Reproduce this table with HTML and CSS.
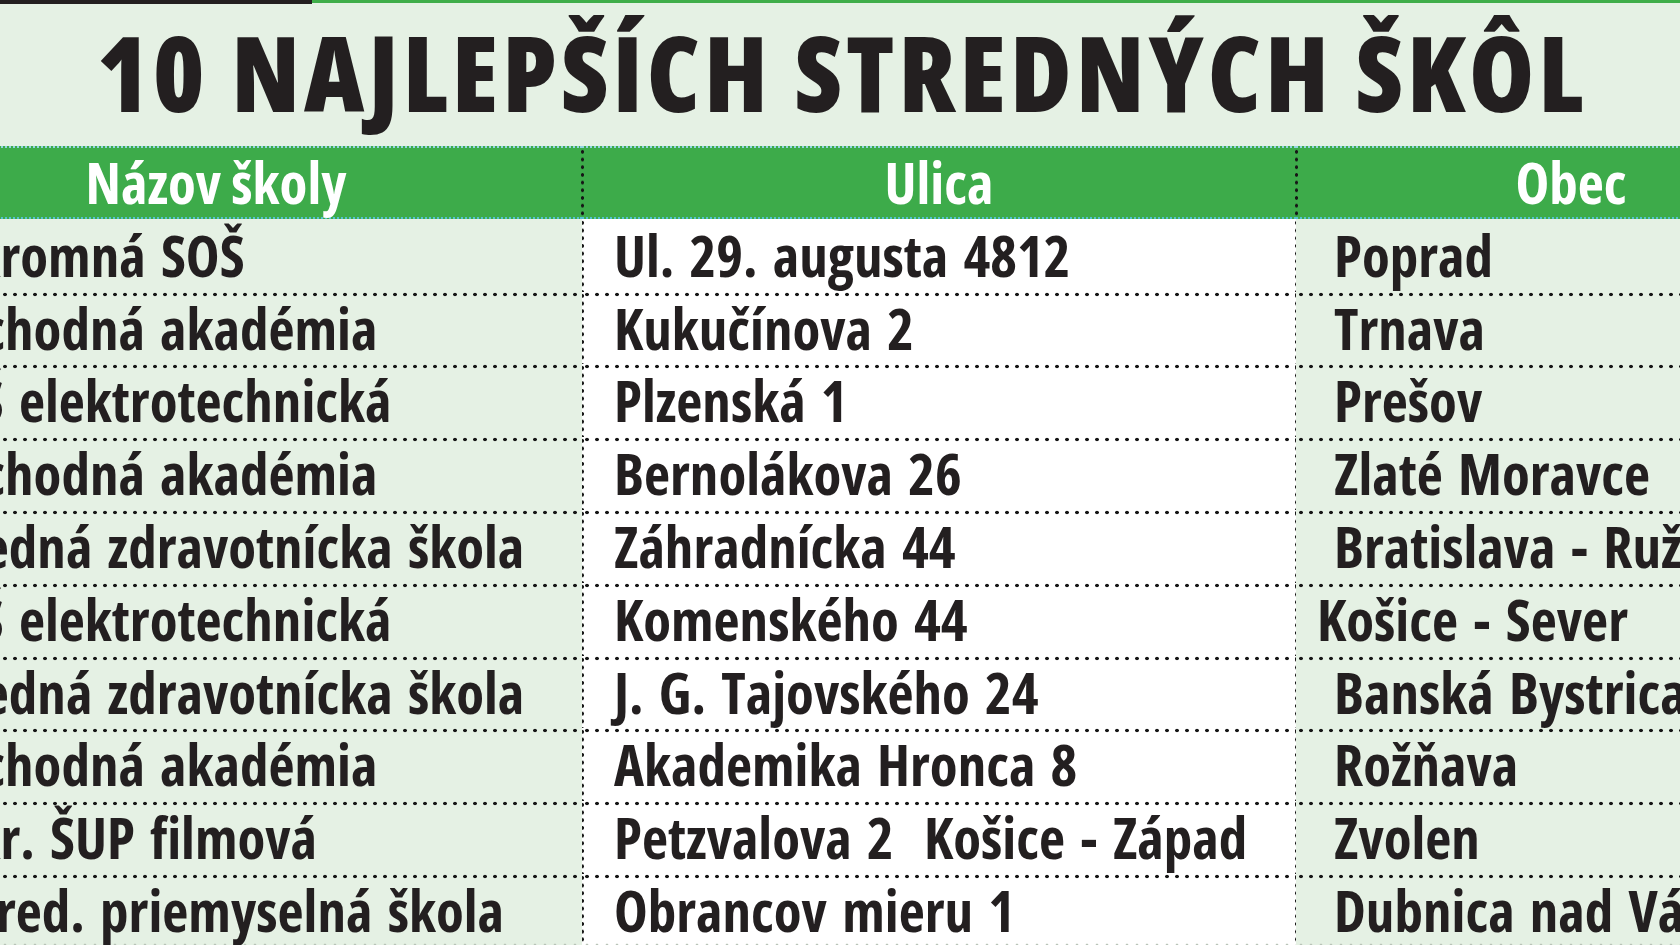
FILE: index.html
```html
<!DOCTYPE html>
<html lang="sk">
<head>
<meta charset="utf-8">
<title>10 najlepších stredných škôl</title>
<link rel="stylesheet" href="styles.css">
</head>
<body>
<div class="page">
  <div class="topline">
    <div class="topline-dark"></div>
    <div class="topline-green"></div>
  </div>
  <h1 class="title">10 NAJLEPŠÍCH STREDNÝCH ŠKÔL</h1>
  <div class="table-wrap">
    <div class="table">
      <div class="th th-name">Názov školy</div>
      <div class="th th-street">Ulica</div>
      <div class="th th-city">Obec</div>

      <div class="td td-name td-first">Súkromná SOŠ</div>
      <div class="td td-street td-first">Ul. 29. augusta 4812</div>
      <div class="td td-city td-first">Poprad</div>

      <div class="td td-name">Obchodná akadémia</div>
      <div class="td td-street">Kukučínova 2</div>
      <div class="td td-city">Trnava</div>

      <div class="td td-name">SOŠ elektrotechnická</div>
      <div class="td td-street">Plzenská 1</div>
      <div class="td td-city">Prešov</div>

      <div class="td td-name">Obchodná akadémia</div>
      <div class="td td-street">Bernolákova 26</div>
      <div class="td td-city">Zlaté Moravce</div>

      <div class="td td-name">Stredná zdravotnícka škola</div>
      <div class="td td-street">Záhradnícka 44</div>
      <div class="td td-city">Bratislava - Ružinov</div>

      <div class="td td-name">SOŠ elektrotechnická</div>
      <div class="td td-street">Komenského 44</div>
      <div class="td td-city td-city-tight">Košice - Sever</div>

      <div class="td td-name">Stredná zdravotnícka škola</div>
      <div class="td td-street">J. G. Tajovského 24</div>
      <div class="td td-city">Banská Bystrica</div>

      <div class="td td-name">Obchodná akadémia</div>
      <div class="td td-street">Akademika Hronca 8</div>
      <div class="td td-city">Rožňava</div>

      <div class="td td-name">Súkr. ŠUP filmová</div>
      <div class="td td-street">Petzvalova 2&nbsp; Košice - Západ</div>
      <div class="td td-city">Zvolen</div>

      <div class="td td-name td-name-indent td-last">Stred. priemyselná škola</div>
      <div class="td td-street td-last">Obrancov mieru 1</div>
      <div class="td td-city td-last">Dubnica nad Váhom</div>
    </div>
  </div>
</div>
</body>
</html>
```

FILE: styles.css
```css
html, body {
  margin: 0;
  padding: 0;
}

body {
  background: #e5f1e4;
  font-family: "Open Sans", "DejaVu Sans Condensed", sans-serif;
  font-stretch: 75%;
  color: #231f20;
  overflow: hidden;
}

.page {
  width: 1680px;
  height: 945px;
  overflow: hidden;
}

.topline {
  display: flex;
  align-items: flex-start;
  height: 4px;
}

.topline-dark {
  width: 312px;
  height: 4px;
  background: #231f20;
}

.topline-green {
  flex: 1;
  height: 3px;
  background: #3fae49;
}

.title {
  margin: 0;
  padding: 15px 0 22px 4px;
  height: 105px;
  font-size: 105px;
  line-height: 105px;
  font-weight: 800;
  font-stretch: 87.5%;
  letter-spacing: 4px;
  text-align: center;
  white-space: nowrap;
}

.table-wrap {
  overflow: hidden;
}

.table {
  display: grid;
  grid-template-columns: 732px 714px 550px;
  grid-auto-rows: 72.8px;
  margin-left: -150px;
  width: 1996px;
}

.th {
  height: 73px;
  box-sizing: border-box;
  background-color: #3dab4a;
  color: #ffffff;
  font-size: 57px;
  font-weight: 700;
  line-height: 69px;
  text-align: center;
  white-space: nowrap;
  border-top: 2px dotted #93d4e2;
  border-bottom: 2px dotted #55c2d2;
}

.td {
  font-size: 57px;
  font-weight: 700;
  line-height: 73px;
  word-spacing: 5px;
  white-space: nowrap;
  overflow: hidden;
  background-image: radial-gradient(circle at center, #161616 1.5px, rgba(0,0,0,0) 2.1px);
  background-size: 10px 5px;
  background-repeat: repeat-x;
  background-position: 0 0;
}

.td-first {
  background-image: none;
}

.td-last {
  background-image:
    radial-gradient(circle at center, #161616 1.5px, rgba(0,0,0,0) 2.1px),
    radial-gradient(circle at center, #b9c4b8 1.1px, rgba(0,0,0,0) 1.7px);
  background-size: 10px 5px, 10px 4px;
  background-repeat: repeat-x, repeat-x;
  background-position: 0 0, 0 69px;
}

.td-name {
  background-color: #e5f1e4;
  padding-left: 70px;
}

.td-name.td-name-indent {
  padding-left: 103px;
}

.td-street,
.th-street {
  position: relative;
}

.td-street {
  background-color: #ffffff;
  padding-left: 32px;
}

.td-street::before,
.td-street::after,
.th-street::before,
.th-street::after {
  content: "";
  position: absolute;
  top: 0;
  bottom: 0;
  width: 5px;
  background-image: radial-gradient(circle at center, #161616 1.4px, rgba(0,0,0,0) 2px);
  background-size: 5px 7.7px;
  background-repeat: repeat-y;
}

.td-street::before,
.th-street::before {
  left: -2px;
}

.td-street::after,
.th-street::after {
  right: -3px;
}

.td-city {
  background-color: #e5f1e4;
  padding-left: 38px;
}

.td-city.td-city-tight {
  padding-left: 21px;
}
```
